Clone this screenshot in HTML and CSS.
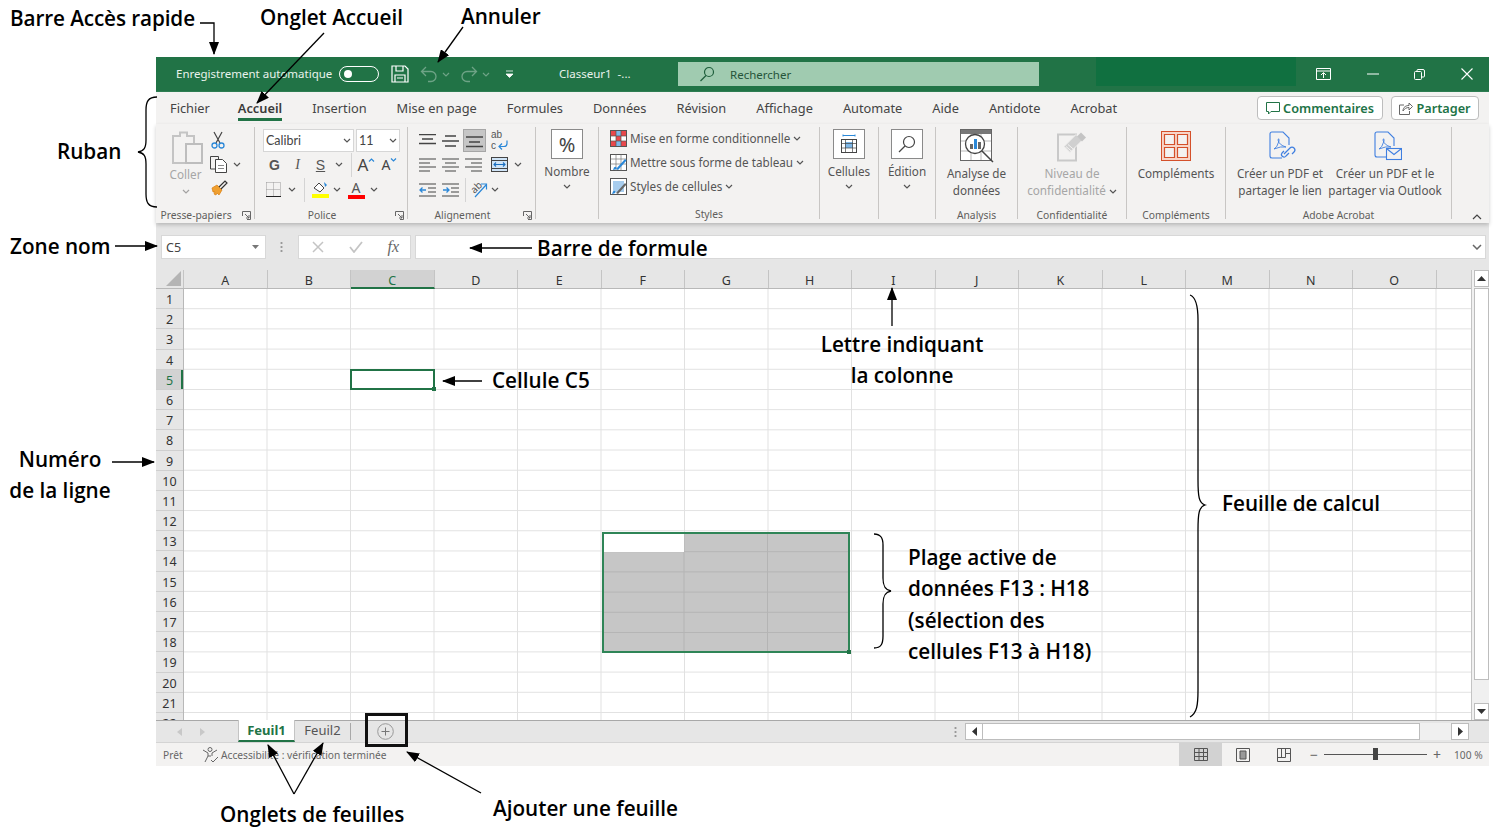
FILE: index.html

```html
<!DOCTYPE html>
<html lang="fr">
<head>
  <meta charset="UTF-8">
  <title>Excel - interface</title>
  <link rel="stylesheet" href="styles.css">
</head>
<body>

<svg class="sprite">
  <symbol id="chev" viewBox="0 0 8 5"><path d="M1 1l3 3 3-3" fill="none" stroke="#555" stroke-width="1.2"/></symbol>
  <symbol id="chev-dim" viewBox="0 0 8 5"><path d="M1 1l3 3 3-3" fill="none" stroke="#6ea386" stroke-width="1.2"/></symbol>
  <symbol id="launch" viewBox="0 0 9 9"><path d="M.5 5V.5H8.500V8.500H5M3 3l4 4M7 4v3H4" fill="none" stroke="#666"/></symbol>
  <symbol id="al-top" viewBox="0 0 17 14"><path d="M0 .5h17M3 5h11M0 9.500h17" stroke="#444" stroke-width="1.300"/></symbol>
  <symbol id="al-mid" viewBox="0 0 17 14"><path d="M3 2h11M0 7h17M3 12h11" stroke="#444" stroke-width="1.300"/></symbol>
  <symbol id="al-left" viewBox="0 0 17 14"><path d="M0 1h17M0 5h11M0 9h17M0 13h11" stroke="#444" stroke-width="1.200"/></symbol>
  <symbol id="al-center" viewBox="0 0 17 14"><path d="M0 1h17M3 5h11M0 9h17M3 13h11" stroke="#444" stroke-width="1.200"/></symbol>
  <symbol id="al-right" viewBox="0 0 17 14"><path d="M0 1h17M6 5h11M0 9h17M6 13h11" stroke="#444" stroke-width="1.200"/></symbol>
</svg>

<main class="excel">

  <header class="titlebar">
    <span class="autosave">Enregistrement automatique</span>
    <span class="toggle"><i></i></span>
    <svg class="qat-save" width="18" height="18" viewBox="0 0 18 18"><path d="M1 1h13l3 3v13H1zM5 1v5h7V1M4 17v-7h10v7M6 13h6" fill="none" stroke="#fff" stroke-width="1.200"/></svg>
    <svg class="qat-undo" width="18" height="17" viewBox="0 0 18 17"><path d="M6 1L1.500 5.500 6 10M2 5.500h9a5 5 0 0 1 0 10H8" fill="none" stroke="#6ea386" stroke-width="1.300"/></svg>
    <svg class="qat-chev" width="8" height="5"><use href="#chev-dim"/></svg>
    <svg class="qat-redo" width="18" height="17" viewBox="0 0 18 17"><path d="M12 1l4.500 4.500L12 10M16 5.500H7a5 5 0 0 0 0 10h3" fill="none" stroke="#6ea386" stroke-width="1.300"/></svg>
    <svg class="qat-chev" width="8" height="5"><use href="#chev-dim"/></svg>
    <svg class="qat-more" width="9" height="8" viewBox="0 0 9 8"><path d="M1 1h7M1 4h7L4.500 7.500z" fill="#fff" stroke="#fff" stroke-width=".8"/></svg>
    <span class="docname">Classeur1 &nbsp;-...</span>
    <div class="search">
      <svg width="16" height="16" viewBox="0 0 16 16"><circle cx="10" cy="6" r="4.500" fill="none" stroke="#1f5f3c" stroke-width="1.200"/><path d="M7 9.500L1.500 15" stroke="#1f5f3c" stroke-width="1.300"/></svg>
      <span>Rechercher</span>
    </div>
    <div class="account"></div>
    <div class="winbtns">
      <svg width="15" height="12" viewBox="0 0 15 12"><path d="M.5.500h14v11H.5zM.5 3h14M7.500 10V5M5 7l2.500-2.500L10 7" fill="none" stroke="#fff"/></svg>
      <svg width="12" height="2" viewBox="0 0 12 2"><path d="M0 1h12" stroke="#fff"/></svg>
      <svg width="11" height="11" viewBox="0 0 11 11"><path d="M.5 3.500q0-1 1-1h5q1 0 1 1v6q0 1-1 1h-5q-1 0-1-1zM3 2.500v-1q0-1 1-1h5q1.500 0 1.500 1.500v5q0 1-1 1h-2" fill="none" stroke="#fff"/></svg>
      <svg width="12" height="12" viewBox="0 0 12 12"><path d="M.5.500l11 11M11.500.500l-11 11" stroke="#fff" stroke-width="1.100"/></svg>
    </div>
  </header>

  <nav class="tabs">
    <a class="tab">Fichier</a>
    <a class="tab on">Accueil</a>
    <a class="tab">Insertion</a>
    <a class="tab">Mise en page</a>
    <a class="tab">Formules</a>
    <a class="tab">Données</a>
    <a class="tab">Révision</a>
    <a class="tab">Affichage</a>
    <a class="tab">Automate</a>
    <a class="tab">Aide</a>
    <a class="tab">Antidote</a>
    <a class="tab">Acrobat</a>
    <div class="tab-actions">
      <button class="action btn-comment">
        <svg width="14" height="13" viewBox="0 0 14 13"><path d="M.5.500h13v9H5L2.500 12V9.500h-2z" fill="none" stroke="#217346"/></svg>Commentaires
      </button>
      <button class="action btn-share">
        <svg width="14" height="13" viewBox="0 0 14 13"><path d="M5 3H.5v9.500h10V9M4 9c0-4 3-5.500 6-5.500V1l3.500 3.500L10 8V5.500C7.500 5.500 5.500 6.500 4 9z" fill="none" stroke="#666"/></svg>Partager
      </button>
    </div>
  </nav>

  <section class="ribbon">

    <div class="group g-clip">
      <div class="g-body clip">
        <div class="paste">
          <svg width="31" height="33" viewBox="0 0 31 33"><path d="M1 5h7V1.500h7V5h7v27H1z" fill="none" stroke="#c4c4c4" stroke-width="2"/><rect x="14" y="13" width="16" height="19" fill="#f3f2f1" stroke="#bdbdbd" stroke-width="2"/></svg>
          <span class="dim">Coller</span>
          <svg width="8" height="5"><use href="#chev"/></svg>
        </div>
        <div class="clip-tools">
          <svg width="14" height="18" viewBox="0 0 14 18"><path d="M3 1l6 11M11 1L5 12" stroke="#444" stroke-width="1.200"/><circle cx="3.500" cy="14.500" r="2.500" fill="none" stroke="#2b88d8" stroke-width="1.300"/><circle cx="10.500" cy="14.500" r="2.500" fill="none" stroke="#2b88d8" stroke-width="1.300"/></svg>
          <span class="copy">
            <svg width="18" height="17" viewBox="0 0 18 17"><path d="M5 13H.5V.5h8v3" fill="none" stroke="#444"/><path d="M5.500 3.500h7l4 4v9h-11z" fill="#fff" stroke="#444"/><path d="M8 9.500h6M8 12.500h6" stroke="#888"/></svg>
            <svg width="8" height="5"><use href="#chev"/></svg>
          </span>
          <svg width="17" height="16" viewBox="0 0 17 16"><path d="M1 8l5-3 5 5-3 5-2-2-1 2-2-1 1-2-2 0z" fill="#f0a030" stroke="#d97e10" stroke-width=".7"/><path d="M8 7l6-6 2 2-6 6" fill="none" stroke="#333" stroke-width="1.200"/></svg>
        </div>
      </div>
      <footer class="g-label">Presse-papiers<svg class="launcher" width="9" height="9"><use href="#launch"/></svg></footer>
    </div>

    <div class="group g-font">
      <div class="g-body stack">
        <div class="row r-first">
          <span class="select sel-font">Calibri<svg width="8" height="5"><use href="#chev"/></svg></span>
          <span class="select sel-size">11<svg width="8" height="5"><use href="#chev"/></svg></span>
        </div>
        <div class="row">
          <b class="t23 glyph">G</b>
          <i class="t23 glyph glyph-i">I</i>
          <u class="t23 glyph glyph-u">S</u>
          <svg class="t-chev" width="8" height="5"><use href="#chev"/></svg>
          <span class="v-sep s1"></span>
          <span class="t23 grow-a big">A<svg width="7" height="4" viewBox="0 0 7 4"><path d="M1 3.500l2.500-2.500 2.500 2.500" fill="none" stroke="#2b88d8" stroke-width="1.200"/></svg></span>
          <span class="t23 grow-a small">A<svg width="7" height="4" viewBox="0 0 7 4"><path d="M1 .5l2.500 2.500 2.500-2.500" fill="none" stroke="#2b88d8" stroke-width="1.200"/></svg></span>
        </div>
        <div class="row">
          <svg class="t21" width="15" height="15" viewBox="0 0 15 15"><path d="M.5.500h14M.5.500v14M14.500.500v14M7.500.500v14M.5 7.500h14" fill="none" stroke="#999" stroke-dasharray="1 1"/><path d="M0 14.500h15" stroke="#222"/></svg>
          <svg class="t-chev c2" width="8" height="5"><use href="#chev"/></svg>
          <span class="v-sep s2"></span>
          <span class="colour c-fill">
            <svg width="15" height="12" viewBox="0 0 15 12"><path d="M1 7l5-5 5 5-4 4z" fill="#fff" stroke="#444"/><path d="M11 1l3 3-2 2z" fill="#2b88d8"/></svg>
            <em class="bar yellow"></em>
          </span>
          <svg class="t-chev c3" width="8" height="5"><use href="#chev"/></svg>
          <span class="colour c-text">
            <span>A</span>
            <em class="bar red"></em>
          </span>
          <svg class="t-chev c4" width="8" height="5"><use href="#chev"/></svg>
        </div>
      </div>
      <footer class="g-label">Police<svg class="launcher" width="9" height="9"><use href="#launch"/></svg></footer>
    </div>

    <div class="group g-align">
      <div class="g-body stack">
        <div class="row r-first">
          <svg class="al" width="17" height="14"><use href="#al-top"/></svg>
          <svg class="al" width="17" height="14"><use href="#al-mid"/></svg>
          <span class="al-on"><svg width="17" height="14" viewBox="0 0 17 14"><path d="M0 3h17M3 8h11M0 12.500h17" stroke="#444" stroke-width="1.300"/></svg></span>
          <span class="wrap">
            <span class="wrap-t">ab<br>c</span>
            <svg width="12" height="10" viewBox="0 0 12 10"><path d="M10 .5v3q0 3-3 3H2M5 3.500L2 6.500l3 3" fill="none" stroke="#2b88d8" stroke-width="1.200"/></svg>
          </span>
        </div>
        <div class="row">
          <svg class="al" width="17" height="14"><use href="#al-left"/></svg>
          <svg class="al" width="17" height="14"><use href="#al-center"/></svg>
          <svg class="al" width="17" height="14"><use href="#al-right"/></svg>
          <svg class="al merge" width="17" height="15" viewBox="0 0 17 15"><rect x=".5" y=".5" width="16" height="14" fill="#cfe4f7" stroke="#444"/><path d="M.5 3.500h16M.5 11.500h16" stroke="#444"/><path d="M3 7.500h11M5 5.500l-2 2 2 2M12 5.500l2 2-2 2" fill="none" stroke="#1a6fc0" stroke-width="1.100"/></svg>
          <svg class="t-chev c5" width="8" height="5"><use href="#chev"/></svg>
        </div>
        <div class="row">
          <svg class="al" width="17" height="14" viewBox="0 0 17 14"><path d="M0 1h17M9 5h8M9 9h8M0 13h17" stroke="#444" stroke-width="1.200"/><path d="M7 7H1M3.500 4.500L1 7l2.500 2.500" fill="none" stroke="#2b88d8" stroke-width="1.300"/></svg>
          <svg class="al" width="17" height="14" viewBox="0 0 17 14"><path d="M0 1h17M9 5h8M9 9h8M0 13h17" stroke="#444" stroke-width="1.200"/><path d="M1 7h6M4.500 4.500L7 7 4.500 9.500" fill="none" stroke="#2b88d8" stroke-width="1.300"/></svg>
          <span class="v-sep s3"></span>
          <span class="orient">
            <span class="orient-t">ab</span>
            <svg width="18" height="17" viewBox="0 0 18 17"><path d="M5 16L16 4M11 3h5.500v5.500" fill="none" stroke="#2b88d8" stroke-width="1.200"/></svg>
          </span>
          <svg class="t-chev c6" width="8" height="5"><use href="#chev"/></svg>
        </div>
      </div>
      <footer class="g-label">Alignement<svg class="launcher" width="9" height="9"><use href="#launch"/></svg></footer>
    </div>

    <div class="group g-num">
      <div class="g-body big-btn">
        <span class="box percent">%</span>
        <span>Nombre</span>
        <svg width="8" height="5"><use href="#chev"/></svg>
      </div>
    </div>

    <div class="group g-styles">
      <div class="g-body style-list">
        <div class="style-item">
          <svg width="17" height="17" viewBox="0 0 17 17"><rect x=".5" y=".5" width="16" height="16" fill="#fff" stroke="#555"/><path d="M1 1h5v5H1zM11 1h5v5h-5zM6 6h5v5H6zM1 11h5v5H1zM11 11h5v5h-5z" fill="#e8484c"/><path d="M6 1h5v5H6zM6 11h5v5H6z" fill="#7fb8e8"/><path d="M.5 6h16M.5 11h16M6 .5v16M11 .5v16" stroke="#555" stroke-width=".7"/></svg>
          <span>Mise en forme conditionnelle</span><svg width="8" height="5"><use href="#chev"/></svg>
        </div>
        <div class="style-item">
          <svg width="17" height="17" viewBox="0 0 17 17"><rect x=".5" y=".5" width="16" height="16" fill="#fff" stroke="#555"/><path d="M.5 5h16M.5 10h16M6 .5v16M11 .5v16" stroke="#777" stroke-width=".7"/><path d="M6 15l9-10 1.500 1.500L8 16z" fill="#2b88d8"/><path d="M3 16q1-4 3-3 2 2-3 3z" fill="#2b88d8"/></svg>
          <span>Mettre sous forme de tableau</span><svg width="8" height="5"><use href="#chev"/></svg>
        </div>
        <div class="style-item">
          <svg width="17" height="17" viewBox="0 0 17 17"><rect x=".5" y=".5" width="16" height="16" fill="#fff" stroke="#555"/><path d="M3 3h11v11H3z" fill="#a8cdee"/><path d="M6 15l9-10 1.500 1.500L8 16z" fill="#666"/><path d="M2 16q1-4 3-3 2 2-3 3z" fill="#2b88d8"/></svg>
          <span>Styles de cellules</span><svg width="8" height="5"><use href="#chev"/></svg>
        </div>
      </div>
      <footer class="g-label">Styles</footer>
    </div>

    <div class="group g-cells">
      <div class="g-body big-btn">
        <span class="box">
          <svg width="18" height="20" viewBox="0 0 18 20"><path d="M3 1.500h12M3 .5v2M15 .5v2" stroke="#2b88d8"/><rect x="1.500" y="5.500" width="15" height="13" fill="#fff" stroke="#444"/><rect x="5" y="8" width="8" height="6" fill="#7fb8e8"/><path d="M1.500 9.500h15M1.500 14h15M5.500 5.500v13M12.500 5.500v13" stroke="#444" stroke-width=".7"/></svg>
        </span>
        <span>Cellules</span>
        <svg width="8" height="5"><use href="#chev"/></svg>
      </div>
    </div>

    <div class="group g-edit">
      <div class="g-body big-btn">
        <span class="box">
          <svg width="18" height="18" viewBox="0 0 18 18"><circle cx="11" cy="7" r="5.500" fill="none" stroke="#444" stroke-width="1.200"/><path d="M7 11l-6 6" stroke="#444" stroke-width="1.300"/></svg>
        </span>
        <span>Édition</span>
        <svg width="8" height="5"><use href="#chev"/></svg>
      </div>
    </div>

    <div class="group g-analysis">
      <div class="g-body tall-btn">
        <svg width="34" height="34" viewBox="0 0 34 34"><rect x=".5" y=".5" width="31" height="31" fill="#fff" stroke="#666"/><rect x="1" y="1" width="30" height="4" fill="#777"/><path d="M1 12h30M1 22h30M11 5v26M21 5v26" stroke="#999" stroke-width=".7"/><circle cx="15" cy="15" r="9.500" fill="#fff" stroke="#444" stroke-width="1.300"/><rect x="10" y="15" width="3" height="5" fill="#666"/><rect x="14" y="10" width="3" height="10" fill="#2b88d8"/><rect x="18" y="13" width="3" height="7" fill="#666"/><path d="M22 22l11 11" stroke="#444" stroke-width="1.500"/></svg>
        <span>Analyse de<br>données</span>
      </div>
      <footer class="g-label">Analysis</footer>
    </div>

    <div class="group g-conf">
      <div class="g-body tall-btn off">
        <svg width="30" height="31" viewBox="0 0 30 31"><path d="M1 4h18v26H1z" fill="none" stroke="#c9c9c9" stroke-width="2"/><path d="M7 16L19 4l6 6-12 12z" fill="#d0d0d0" stroke="#f3f2f1"/><path d="M20 6l4-4 5 5-4 4z" fill="#c4c4c4"/><path d="M9 16l7 6M11 14l7 6" stroke="#f3f2f1"/></svg>
        <span>Niveau de<br>confidentialité <svg width="8" height="5"><use href="#chev"/></svg></span>
      </div>
      <footer class="g-label">Confidentialité</footer>
    </div>

    <div class="group g-addins">
      <div class="g-body tall-btn">
        <svg width="30" height="30" viewBox="0 0 30 30"><rect x=".5" y=".5" width="29" height="29" fill="#f8d5c8" stroke="#d4502a"/><path d="M3.500 3.500h10v10h-10zM16.500 3.500h10v10h-10zM3.500 16.500h10v10h-10zM16.500 16.500h10v10h-10z" fill="#f3f2f1" stroke="#d4502a" stroke-width="1.200"/></svg>
        <span>Compléments</span>
      </div>
      <footer class="g-label">Compléments</footer>
    </div>

    <div class="group g-adobe">
      <div class="g-body pdfs">
        <div class="tall-btn pdf-one">
          <svg width="28" height="30" viewBox="0 0 28 30"><path d="M13 27H3q-2 0-2-2V3q0-2 2-2h11l6 6v7" fill="none" stroke="#3f7fe0" stroke-width="1.100"/><path d="M5 18q3-1 5-8 0-4-1-1 1 5 8 7-5-1-12 2z" fill="none" stroke="#3f7fe0" stroke-width=".9"/><path d="M15 23l6-6a2.500 2.500 0 0 1 4 4l-2 2M20 22l-3 3a2.500 2.500 0 0 1-4-3l2-2" fill="none" stroke="#3f7fe0" stroke-width="1.200"/></svg>
          <span>Créer un PDF et<br>partager le lien</span>
        </div>
        <div class="tall-btn pdf-two">
          <svg width="28" height="30" viewBox="0 0 28 30"><path d="M12 26H3q-2 0-2-2V3q0-2 2-2h11l6 6v8" fill="none" stroke="#3f7fe0" stroke-width="1.100"/><path d="M5 18q3-1 5-8 0-4-1-1 1 5 8 7-5-1-12 2z" fill="none" stroke="#3f7fe0" stroke-width=".9"/><rect x="12.500" y="17.500" width="15" height="11" fill="#f3f2f1" stroke="#3f7fe0" stroke-width="1.100"/><path d="M12.500 17.500l7.500 6 7.500-6" fill="none" stroke="#3f7fe0" stroke-width="1.100"/></svg>
          <span>Créer un PDF et le<br>partager via Outlook</span>
        </div>
      </div>
      <footer class="g-label">Adobe Acrobat</footer>
    </div>

    <svg class="collapse" width="10" height="6" viewBox="0 0 10 6"><path d="M1 5l4-4 4 4" fill="none" stroke="#444" stroke-width="1.200"/></svg>
  </section>

  <section class="formulabar">
    <div class="namebox">C5<svg width="7" height="4" viewBox="0 0 7 4"><path d="M0 0h7L3.500 4z" fill="#777"/></svg></div>
    <span class="grip"></span>
    <div class="fx-box">
      <svg width="12" height="12" viewBox="0 0 12 12"><path d="M1 1l10 10M11 1L1 11" stroke="#c4c4c4" stroke-width="1.500"/></svg>
      <svg width="14" height="12" viewBox="0 0 14 12"><path d="M1 6l4 5 8-10" fill="none" stroke="#c4c4c4" stroke-width="1.800"/></svg>
      <em>fx</em>
    </div>
    <div class="formula-input">
      <svg width="10" height="6" viewBox="0 0 10 6"><path d="M1 1l4 4 4-4" fill="none" stroke="#666" stroke-width="1.500"/></svg>
    </div>
  </section>

  <section class="sheet">
    <div class="sheet-main">
      <div class="col-heads">
        <span class="corner"><svg width="15" height="15" viewBox="0 0 15 15"><path d="M15 0v15H0z" fill="#b4b4b4"/></svg></span>
        <span class="ch">A</span>
        <span class="ch">B</span>
        <span class="ch sel">C</span>
        <span class="ch">D</span>
        <span class="ch">E</span>
        <span class="ch">F</span>
        <span class="ch">G</span>
        <span class="ch">H</span>
        <span class="ch">I</span>
        <span class="ch">J</span>
        <span class="ch">K</span>
        <span class="ch">L</span>
        <span class="ch">M</span>
        <span class="ch">N</span>
        <span class="ch">O</span>
        <span class="ch last"></span>
      </div>
      <div class="sheet-body">
        <div class="row-heads">
          <span>1</span><span>2</span><span>3</span><span>4</span>
          <span class="sel">5</span>
          <span>6</span><span>7</span><span>8</span><span>9</span><span>10</span>
          <span>11</span><span>12</span><span>13</span><span>14</span><span>15</span>
          <span>16</span><span>17</span><span>18</span><span>19</span><span>20</span>
          <span>21</span><span>22</span>
        </div>
        <div class="cells">
          <div class="active-cell"></div>
          <div class="range">
            <div class="range-first"></div>
          </div>
        </div>
      </div>
    </div>
    <aside class="vscroll">
      <span class="sb-btn"><svg width="9" height="5" viewBox="0 0 9 5"><path d="M0 5h9L4.500 0z" fill="#333"/></svg></span>
      <span class="sb-thumb"></span>
      <span class="sb-btn sb-down"><svg width="9" height="5" viewBox="0 0 9 5"><path d="M0 0h9L4.500 5z" fill="#333"/></svg></span>
    </aside>
  </section>

  <section class="sheetbar">
    <svg class="nav-a" width="5" height="8" viewBox="0 0 5 8"><path d="M5 0v8L0 4z" fill="#c8c8c8"/></svg>
    <svg class="nav-b" width="5" height="8" viewBox="0 0 5 8"><path d="M0 0v8l5-4z" fill="#c8c8c8"/></svg>
    <span class="stab stab-on">Feuil1</span>
    <span class="stab stab-off">Feuil2</span>
    <span class="stab-sep"></span>
    <span class="addsheet"><svg width="17" height="17" viewBox="0 0 17 17"><circle cx="8.500" cy="8.500" r="7.800" fill="none" stroke="#999"/><path d="M8.500 4.500v8M4.500 8.500h8" stroke="#777"/></svg></span>
    <span class="hgrip"></span>
    <div class="hscroll">
      <span class="sb-btn"><svg width="5" height="9" viewBox="0 0 5 9"><path d="M5 0v9L0 4.500z" fill="#333"/></svg></span>
      <span class="h-thumb"></span>
      <span class="h-track"></span>
      <span class="sb-btn"><svg width="5" height="9" viewBox="0 0 5 9"><path d="M0 0v9l5-4.500z" fill="#333"/></svg></span>
    </div>
  </section>

  <footer class="statusbar">
    <span class="ready">Prêt</span>
    <svg class="a11y" width="17" height="16" viewBox="0 0 17 16"><circle cx="8" cy="2.500" r="2" fill="none" stroke="#666"/><path d="M1 3l5 3v3l-3 6M15 3l-5 3v3M6 9h3M9 13l2 2 5-5" fill="none" stroke="#666"/></svg>
    <span class="a11y-text">Accessibilité : vérification terminée</span>
    <div class="views">
      <span class="view view-on"><svg width="14" height="13" viewBox="0 0 14 13"><path d="M.5.500h13v12H.5zM.5 4.500h13M.5 8.500h13M5 .5v12M9.500.5v12" fill="none" stroke="#555"/></svg></span>
      <span class="view"><svg width="14" height="14" viewBox="0 0 14 14"><path d="M.5.500h13v13H.5z" fill="none" stroke="#555"/><path d="M4 3h6v8H4z" fill="#999" stroke="#555"/></svg></span>
      <span class="view"><svg width="14" height="14" viewBox="0 0 14 14"><path d="M.5.500h13v13H.5zM.5 9.500h8v-9M8.500 5.500h5M4.500.5v9" fill="none" stroke="#555"/></svg></span>
    </div>
    <span class="zoom-sign">−</span>
    <span class="slider"><i></i></span>
    <span class="zoom-sign">+</span>
    <span class="zoom-val">100 %</span>
  </footer>
</main>

<!-- annotations par-dessus la capture -->
<svg class="arrows" width="1509" height="829" viewBox="0 0 1509 829">
  <defs>
    <marker id="head" markerUnits="userSpaceOnUse" markerWidth="13" markerHeight="10" refX="12" refY="5" orient="auto"><path d="M0 0l13 5-13 5z" fill="#000"/></marker>
  </defs>
  <g fill="none" stroke="#000" stroke-width="1.300">
    <path d="M200 23h14v31" marker-end="url(#head)"/>
    <path d="M324 33L257 103" marker-end="url(#head)"/>
    <path d="M463 27L438 62" marker-end="url(#head)"/>
    <path d="M115 246h42" marker-end="url(#head)"/>
    <path d="M532 248h-62" marker-end="url(#head)"/>
    <path d="M892 326v-38" marker-end="url(#head)"/>
    <path d="M482 381h-39" marker-end="url(#head)"/>
    <path d="M112 462h42" marker-end="url(#head)"/>
    <path d="M294 794L268 745" marker-end="url(#head)"/>
    <path d="M294 794L323 743" marker-end="url(#head)"/>
    <path d="M481 793L407 752" marker-end="url(#head)"/>
    <path d="M157 97C148 97 146 102 146 110V140C146 148 144 151 138 152C144 153 146 156 146 164V194C146 202 148 207 157 207"/>
    <path d="M1190 295C1196 297 1198 305 1198 320V480C1198 497 1199 503 1205 505C1199 507 1198 513 1198 530V690C1198 705 1197 713 1190 717"/>
    <path d="M874 534C881 534 883 538 883 545V578C883 586 885 590 891 591C885 592 883 596 883 604V636C883 644 881 648 874 648"/>
  </g>
</svg>
<div class="addbox"></div>

<p class="note n-qat">Barre Accès rapide</p>
<p class="note n-tab">Onglet Accueil</p>
<p class="note n-undo">Annuler</p>
<p class="note n-ribbon">Ruban</p>
<p class="note n-name">Zone nom</p>
<p class="note n-formula">Barre de formule</p>
<p class="note n-letter">Lettre indiquant<br>la colonne</p>
<p class="note n-cell">Cellule C5</p>
<p class="note n-row">Numéro<br>de la ligne</p>
<p class="note n-sheet">Feuille de calcul</p>
<p class="note n-range">Plage active de<br>données F13 : H18<br>(sélection des<br>cellules F13 à H18)</p>
<p class="note n-tabs">Onglets de feuilles</p>
<p class="note n-add">Ajouter une feuille</p>

</body>
</html>
```

FILE: styles.css

```css
* {
  box-sizing: border-box;
}

body {
  margin: 0;
  width: 1509px;
  height: 829px;
  overflow: hidden;
  position: relative;
  background: #fff;
  font-family: "Noto Sans", "Open Sans", sans-serif;
  color: #444;
}

.sprite {
  display: none;
}

svg {
  flex: none;
  display: block;
}

.excel {
  width: 1333px;
  margin: 57px 0 0 156px;
  display: flex;
  flex-direction: column;
  float: left;
}

/* barre de titre */
.titlebar {
  height: 35px;
  background: #217346;
  color: #e9f2ec;
  display: flex;
  align-items: center;
  font-size: 11.500px;
  border-bottom: 1px solid #2d7d52;
}

.autosave {
  margin: -2px 0 0 20px;
  width: 157px;
  white-space: nowrap;
}

.toggle {
  width: 40px;
  height: 16px;
  margin-left: 6px;
  border: 1px solid #fff;
  border-radius: 8px;
  padding: 3px 4px;
}

.toggle i {
  display: block;
  width: 8px;
  height: 8px;
  border-radius: 50%;
  background: #fff;
}

.qat-save { margin-left: 12px; }
.qat-undo { margin-left: 11px; }
.qat-chev { margin-left: 4px; }
.qat-redo { margin-left: 10px; }
.qat-more { margin-left: 15px; }

.docname {
  margin: -2px 0 0 45px;
  width: 119px;
  white-space: nowrap;
}

.search {
  width: 361px;
  height: 24px;
  background: #a0cbb0;
  color: #26543a;
  display: flex;
  align-items: center;
  padding-left: 21px;
  gap: 15px;
}

.account {
  width: 200px;
  height: 29px;
  margin: 0 0 5px 57px;
  background: #107040;
}

.winbtns {
  display: flex;
  align-items: center;
  justify-content: space-between;
  flex: 1;
  padding: 0 16px 0 20px;
}

/* onglets */
.tabs {
  height: 32px;
  background: #f3f2f1;
  display: flex;
  padding-left: 14px;
  gap: 30px;
  font-size: 12.800px;
  position: relative;
}

.tab {
  height: 29px;
  line-height: 33px;
  color: #444;
  white-space: nowrap;
}

.tab:first-child {
  margin-right: -2px;
}

.tab.on {
  color: #3b3b3b;
  font-weight: 600;
  border-bottom: 3px solid #217346;
}

.tab-actions {
  margin-left: auto;
  display: flex;
  gap: 8px;
  padding: 4px 10px 0 0;
}

.action {
  height: 24px;
  border: 1px solid #bdbdbd;
  border-radius: 4px;
  background: #fff;
  color: #217346;
  font: 600 12.700px "Noto Sans", sans-serif;
  display: flex;
  align-items: center;
  gap: 3px;
  padding: 0;
  justify-content: center;
}

.btn-comment { width: 126px; }
.btn-share { width: 88px; }

/* ruban */
.ribbon {
  height: 99px;
  background: #f3f2f1;
  display: flex;
  padding-top: 3px;
  box-shadow: 0 2px 4px rgba(0, 0, 0, .2);
  position: relative;
  z-index: 1;
  font-size: 11.700px;
  color: #555;
}

.group {
  height: 92px;
  border-right: 1px solid #c8c6c4;
  position: relative;
  flex: none;
}

.g-clip { width: 99px; }
.g-font { width: 153px; }
.g-align { width: 128px; }
.g-num { width: 63px; }
.g-styles { width: 221px; }
.g-cells { width: 59px; }
.g-edit { width: 57px; }
.g-analysis { width: 82px; }
.g-conf { width: 109px; }
.g-addins { width: 99px; }
.g-adobe { width: 226px; }

.g-body {
  height: 80px;
}

.g-label {
  height: 12px;
  line-height: 13px;
  margin-top: 2px;
  font-size: 10.300px;
  color: #605e5c;
  text-align: center;
  position: relative;
  padding-right: 18px;
}

.g-styles .g-label,
.g-analysis .g-label,
.g-conf .g-label,
.g-addins .g-label,
.g-adobe .g-label {
  padding-right: 0;
}

.launcher {
  position: absolute;
  right: 3px;
  top: 2px;
}

.clip {
  display: flex;
  padding-left: 15px;
}

.paste {
  width: 33px;
  padding-top: 4px;
  display: flex;
  flex-direction: column;
  align-items: center;
}

.paste span {
  margin: 2px 4px 0 0;
  line-height: 17px;
}

.paste svg:last-child {
  margin: 6px 4px 0 0;
  opacity: .5;
}

.dim {
  color: #a6a6a6;
}

.clip-tools {
  margin-left: 5px;
  padding-top: 4px;
  display: flex;
  flex-direction: column;
  gap: 7px;
  align-items: flex-start;
  padding-left: 1px;
}

.clip-tools > svg:first-child { margin-left: 1px; }
.clip-tools > svg:last-child { margin-left: 1px; }

.copy {
  display: flex;
  align-items: center;
  gap: 5px;
}

.stack {
  padding-top: 2px;
}

.row {
  display: flex;
  align-items: center;
  height: 25px;
  padding-left: 8px;
}

.r-first {
  height: 23px;
  gap: 2px;
}

.g-align .r-first {
  gap: 0;
}

.select {
  height: 23px;
  background: #fff;
  border: 1px solid #d6d6d6;
  display: flex;
  align-items: center;
  justify-content: space-between;
  padding: 0 2px 0 2px;
  font-family: Lato, sans-serif;
  font-size: 12.500px;
  color: #444;
}

.sel-font { width: 91px; }
.sel-size { width: 44px; }

.t23 {
  width: 23px;
  text-align: center;
  font-style: normal;
  text-decoration: none;
  font-size: 14px;
  flex: none;
}

.t21 {
  margin: 0 3px;
}

.glyph {
  font-family: "Liberation Sans", sans-serif;
}

.glyph-i {
  font-family: "Liberation Serif", serif;
  font-style: italic;
}

.glyph-u {
  text-decoration: underline;
  font-weight: 400;
}

.t-chev { margin-left: 3px; }
.c2 { margin-left: 4px; }
.c3 { margin-left: 2px; }
.c4 { margin-left: 3px; }
.c5 { margin-left: 6px; }
.c6 { margin-left: 3px; }

.v-sep {
  width: 1px;
  height: 24px;
  background: #d4d4d4;
  flex: none;
}

.s1 { margin: 0 3px 0 8px; }
.s2 { margin: 0 4px 0 8px; }
.s3 { margin: 0 4px 0 3px; }

.grow-a {
  font-family: "Noto Sans", sans-serif;
  color: #444;
  line-height: 20px;
  display: flex;
  justify-content: center;
}

.grow-a svg {
  margin-top: 3px;
}

.big { font-size: 17px; }
.small { font-size: 14px; }

.colour {
  width: 22px;
  display: flex;
  flex-direction: column;
  align-items: center;
  flex: none;
  font-size: 14px;
  line-height: 13px;
}

.c-text { margin-left: 4px; }

.bar {
  display: block;
  width: 17px;
  height: 4px;
  margin-top: 1px;
}

.yellow { background: #ffff00; }
.red { background: #ff0000; }

.al {
  margin: 0 3px;
}

.al-on {
  width: 23px;
  height: 23px;
  background: #c6c6c6;
  border: 1px solid #a6a6a6;
  display: flex;
  align-items: center;
  justify-content: center;
  margin-left: 1px;
}

.wrap {
  width: 17px;
  height: 21px;
  margin-left: 5px;
  position: relative;
  font-family: "Liberation Sans", sans-serif;
  font-size: 10px;
  line-height: 10.500px;
}

.wrap-t {
  display: block;
}

.wrap svg {
  position: absolute;
  right: -1px;
  bottom: 1px;
}

.merge { margin: 0 0 0 6px; }

.orient {
  width: 18px;
  height: 17px;
  position: relative;
  font-size: 10px;
  line-height: 12px;
}

.orient-t {
  position: absolute;
  left: 0;
  top: 0;
  transform: rotate(-45deg);
}

/* gros boutons */
.big-btn {
  display: flex;
  flex-direction: column;
  align-items: center;
  padding-top: 2px;
  color: #555;
}

.box {
  width: 32px;
  height: 30px;
  background: #fff;
  border: 1px solid #8a8a8a;
  display: flex;
  align-items: center;
  justify-content: center;
  margin-bottom: 4px;
}

.percent {
  font-size: 20px;
  color: #444;
}

.big-btn > svg {
  margin-top: 5px;
}

.style-list {
  padding: 0 0 0 11px;
  margin-top: -1px;
}

.style-item {
  height: 24px;
  display: flex;
  align-items: center;
  gap: 3px;
  white-space: nowrap;
}

.tall-btn {
  display: flex;
  flex-direction: column;
  align-items: center;
  text-align: center;
  padding-top: 2px;
  line-height: 17px;
  white-space: nowrap;
}

.tall-btn > svg {
  height: 34px;
  margin-bottom: 2px;
}

.tall-btn span svg {
  display: inline-block;
  vertical-align: middle;
}

.off {
  color: #a6a6a6;
}

.pdfs {
  display: flex;
  padding-left: 3px;
}

.pdf-one { width: 102px; }
.pdf-two { width: 108px; }

.pdfs svg {
  margin-left: 6px;
}

.collapse {
  position: absolute;
  right: 7px;
  bottom: 3px;
}

/* barre de formule */
.formulabar {
  height: 47px;
  background: #e6e6e6;
  display: flex;
  padding: 12px 3px 0 5px;
}

.namebox,
.fx-box,
.formula-input {
  height: 24px;
  background: #fff;
  border: 1px solid #d8d8d8;
  display: flex;
  align-items: center;
}

.namebox {
  width: 105px;
  justify-content: space-between;
  padding: 0 6px 0 4px;
  font-size: 12.500px;
  color: #444;
}

.grip {
  width: 3px;
  height: 12px;
  margin: 6px 15px 0 14px;
  background: radial-gradient(circle, #999 1px, transparent 1.200px) 0 0 / 3px 4px;
}

.fx-box {
  width: 113px;
  padding: 0 11px 0 13px;
  justify-content: space-between;
}

.fx-box em {
  font-family: "Liberation Serif", serif;
  font-size: 16px;
  color: #666;
}

.formula-input {
  flex: 1;
  margin-left: 4px;
  justify-content: flex-end;
  padding-right: 3px;
}

/* feuille */
.sheet {
  height: 450px;
  display: flex;
  background: #e6e6e6;
}

.sheet-main {
  width: 1315px;
  overflow: hidden;
  display: flex;
  flex-direction: column;
}

.col-heads {
  height: 19px;
  display: flex;
  flex: none;
  background: #e6e6e6;
  border-bottom: 1px solid #b8b8b8;
  font-size: 12.500px;
  color: #333;
}

.corner {
  width: 28px;
  flex: none;
  border-right: 1px solid #c4c4c4;
  display: flex;
  justify-content: flex-end;
  align-items: flex-end;
  padding: 0 2px 2px 0;
}

.ch {
  width: 83.500px;
  flex: none;
  text-align: center;
  line-height: 21px;
  border-right: 1px solid #c4c4c4;
}

.ch.sel {
  background: #d2d2d2;
  color: #217346;
  height: 19px;
  border-bottom: 2px solid #217346;
}

.ch.last {
  border-right: 0;
}

.sheet-body {
  flex: 1;
  display: flex;
  overflow: hidden;
  position: relative;
}

.row-heads {
  width: 28px;
  flex: none;
  background: #e6e6e6;
  border-right: 1px solid #b8b8b8;
  font-size: 12.500px;
  color: #333;
}

.row-heads span {
  display: block;
  height: 20.190px;
  line-height: 21px;
  text-align: center;
  border-bottom: 1px solid #cfcfcf;
}

.row-heads span.sel {
  background: #d2d2d2;
  color: #217346;
  box-shadow: inset -2px 0 #217346;
}

.cells {
  flex: 1;
  position: relative;
  background-color: #fff;
  background-image:
    linear-gradient(to left, #e1e1e1 1px, transparent 1px),
    linear-gradient(to top, #e1e1e1 1px, transparent 1px);
  background-size: 83.500px 20.190px;
}

.active-cell {
  position: absolute;
  left: 166px;
  top: 80px;
  width: 85px;
  height: 21px;
  border: 2px solid #217346;
}

.active-cell::after,
.range::after {
  content: "";
  position: absolute;
  right: -3px;
  bottom: -3px;
  width: 4px;
  height: 4px;
  background: #217346;
}

.range {
  position: absolute;
  left: 418px;
  top: 243px;
  width: 248px;
  height: 121px;
  border: 2px solid #2f8557;
  background-color: #c6c6c6;
  background-image:
    linear-gradient(to left, #b4b4b4 1px, transparent 1px),
    linear-gradient(to top, #b4b4b4 1px, transparent 1px);
  background-size: 83.500px 20.190px;
  background-position: -3px -2px;
}

.range-first {
  width: 80px;
  height: 18px;
  background: #fff;
}

/* ascenseurs */
.vscroll {
  width: 18px;
  padding: 0 1px 0 2px;
  background: #f0f0f0;
  border-left: 1px solid #c4c4c4;
  display: flex;
  flex-direction: column;
}

.sb-btn {
  width: 18px;
  height: 17px;
  background: #fff;
  border: 1px solid #bdbdbd;
  display: flex;
  align-items: center;
  justify-content: center;
  flex: none;
}

.vscroll .sb-btn {
  width: 15px;
}

.sb-thumb {
  height: 392px;
  margin-top: 1px;
  width: 15px;
  background: #fff;
  border: 1px solid #bdbdbd;
}

.sb-down {
  margin-top: auto;
}

.sheetbar {
  height: 23px;
  background: #e6e6e6;
  border-top: 1px solid #a8a8a8;
  border-bottom: 1px solid #d4d4d4;
  display: flex;
  align-items: center;
  font-size: 13px;
  color: #555;
}

.nav-a { margin-left: 21px; }
.nav-b { margin: 0 33px 0 18px; }

.stab {
  width: 55px;
  text-align: center;
  line-height: 20px;
}

.stab-off {
  margin-top: -3px;
}

.stab-on {
  height: 22px;
  width: 57px;
  background: #fff;
  color: #217346;
  font-weight: 700;
  border-bottom: 2px solid #217346;
  border-left: 1px solid #c4c4c4;
  border-right: 1px solid #c4c4c4;
  margin-top: -1px;
}

.stab-sep {
  width: 1px;
  height: 17px;
  background: #a8a8a8;
}

.addsheet {
  margin-left: 26px;
}

.hgrip {
  width: 3px;
  height: 12px;
  margin-left: 560px;
  background: radial-gradient(circle, #999 1px, transparent 1.200px) 0 0 / 3px 4px;
}

.hscroll {
  display: flex;
  height: 17px;
  margin-left: 8px;
}

.h-thumb {
  width: 437px;
  background: #fff;
  border: 1px solid #bdbdbd;
  border-left: 0;
}

.h-track {
  width: 31px;
  background: #f0f0f0;
}

.statusbar {
  height: 23px;
  background: #f3f2f1;
  display: flex;
  align-items: center;
  font-size: 10.200px;
  color: #666;
  white-space: nowrap;
}

.ready { margin-left: 7px; width: 39px; }
.a11y-text { margin-left: 2px; width: 958px; }

.views {
  display: flex;
  height: 23px;
}

.view {
  width: 41px;
  display: flex;
  align-items: center;
  justify-content: center;
}

.view-on {
  width: 43px;
  background: #d2d2d2;
}

.zoom-sign {
  font-size: 14px;
  width: 10px;
  margin-left: 5px;
  text-align: center;
}

.slider {
  width: 103px;
  height: 1px;
  margin-left: 5px;
  background: #555;
  position: relative;
}

.slider i {
  position: absolute;
  left: 49px;
  top: -6px;
  width: 5px;
  height: 12px;
  background: #444;
}

.zoom-val {
  margin-left: 12px;
}

/* annotations */
.arrows {
  position: absolute;
  left: 0;
  top: 0;
  z-index: 5;
}

.addbox {
  position: absolute;
  left: 365px;
  top: 713px;
  width: 43px;
  height: 34px;
  border: 3px solid #111;
  z-index: 5;
}

.note {
  position: absolute;
  margin: 0;
  z-index: 6;
  color: #000;
  font-family: "Open Sans", sans-serif;
  font-weight: 600;
  font-size: 20.700px;
  line-height: 31px;
  white-space: nowrap;
}

.n-qat { left: 10px; top: 3px; letter-spacing: -.1px; }
.n-tab { left: 260px; top: 2px; }
.n-undo { left: 461px; top: 1px; }
.n-ribbon { left: 57px; top: 136px; }
.n-name { left: 10px; top: 231px; }
.n-formula { left: 537px; top: 233px; }
.n-letter { left: 802px; top: 329px; width: 200px; text-align: center; }
.n-cell { left: 492px; top: 365px; }
.n-row { left: -40px; top: 444px; width: 200px; text-align: center; }
.n-sheet { left: 1222px; top: 488px; }
.n-range { left: 908px; top: 542px; line-height: 31.300px; }
.n-tabs { left: 220px; top: 799px; }
.n-add { left: 493px; top: 793px; }
```
